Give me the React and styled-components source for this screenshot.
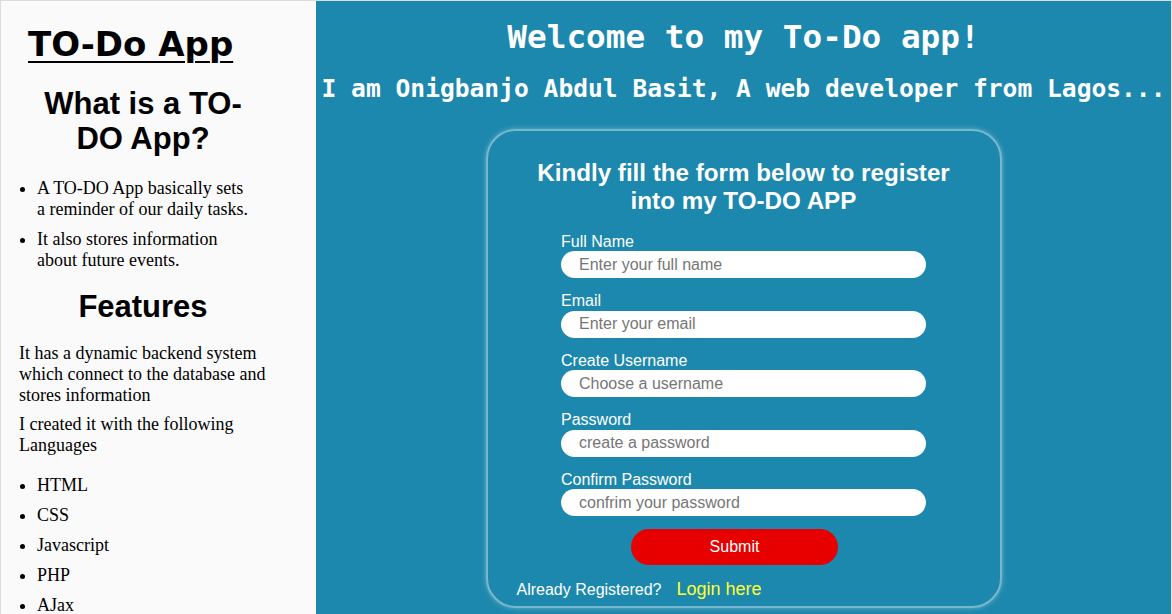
import React from 'react';
import styled, { createGlobalStyle } from 'styled-components';

const GlobalStyle = createGlobalStyle`
    html, body {
        margin: 0;
        padding: 0;
    }
    body {
        font-family: "Liberation Serif", "Times New Roman", serif;
        font-size: 18px;
        color: #000;
        background: #fff;
    }
    * {
        box-sizing: border-box;
    }
`;

const Page = styled.div`
    display: flex;
    width: 1172px;
    min-height: 614px;
    border-top: 1px solid #dcdcdc;
    border-left: 1px solid #dcdcdc;
    border-right: 1px solid #e6e6e6;
`;

const Sidebar = styled.aside`
    width: 315px;
    flex-shrink: 0;
    background-color: #fafafa;
    padding: 0 49px 0 18px;
`;

const Logo = styled.h1`
    margin: 23px 0 0 9px;
    font-family: "Comic Sans MS", "DejaVu Sans", sans-serif;
    font-size: 34px;
    line-height: 40px;
    font-weight: bold;
    text-decoration: underline;
    text-decoration-thickness: 2px;
    text-underline-offset: 5px;
`;

const SideHeading = styled.h2`
    margin: ${props => props.top}px 10px 0;
    font-family: "Liberation Sans", Arial, sans-serif;
    font-size: 31px;
    line-height: 35px;
    font-weight: bold;
    text-align: center;
`;

const List = styled.ul`
    margin: ${props => props.top}px 0 0;
    padding: 0 14px 0 18px;
    list-style: disc;
`;

const Item = styled.li`
    line-height: 21px;
    & + & {
        margin-top: 9px;
    }
`;

const Para = styled.p`
    margin: ${props => props.top}px 0 0;
    line-height: 21px;
`;

const Main = styled.main`
    flex: 1;
    background-color: #1d88ad;
    color: #fff;
    padding-bottom: 8px;
`;

const Welcome = styled.h1`
    margin: 17px 0 0;
    font-family: "DejaVu Sans Mono", "Liberation Mono", monospace;
    font-size: 32.7px;
    line-height: 38px;
    font-weight: bold;
    text-align: center;
`;

const Intro = styled.h2`
    margin: 17.5px 0 0;
    font-family: "DejaVu Sans Mono", "Liberation Mono", monospace;
    font-size: 24.6px;
    line-height: 29px;
    font-weight: bold;
    text-align: center;
    white-space: nowrap;
`;

// register card: faint light border with a soft glow
const Card = styled.section`
    width: 516px;
    margin: 26px auto 0;
    padding: 28px 29px 6px;
    border: 2px solid rgba(255, 255, 255, 0.4);
    border-radius: 30px;
    box-shadow: 0 0 5px rgba(255, 255, 255, 0.35);
    font-family: "Liberation Sans", Arial, sans-serif;
`;

const CardTitle = styled.h3`
    margin: 0;
    font-size: 24.2px;
    line-height: 28px;
    font-weight: bold;
    text-align: center;
`;

const Form = styled.form`
    width: 365px;
    margin: 18px auto 0;
    display: flex;
    flex-direction: column;
`;

const Field = styled.div`
    display: flex;
    flex-direction: column;
    margin-bottom: ${props => (props.last ? 0 : 14)}px;
`;

const Label = styled.label`
    font-size: 16px;
    line-height: 18.5px;
`;

const Input = styled.input`
    width: 100%;
    height: 27px;
    border: none;
    border-radius: 14px;
    padding: 0 18px;
    background: #fff;
    font-family: "Liberation Sans", Arial, sans-serif;
    font-size: 16px;
    color: #222;
    outline: none;
    &::placeholder {
        color: #767676;
    }
`;

const SubmitButton = styled.button`
    width: 207px;
    height: 36px;
    margin: 13px 0 0 70px;
    border: none;
    border-radius: 18px;
    background-color: #e60000;
    color: #fff;
    font-family: "Liberation Sans", Arial, sans-serif;
    font-size: 16px;
    cursor: pointer;
`;

const Footer = styled.div`
    display: flex;
    align-items: center;
    gap: 15px;
    height: 21px;
    margin-top: 14px;
    font-size: 16px;
`;

const LoginLink = styled.a`
    color: #ffff33;
    font-size: 18px;
    text-decoration: none;
`;

const fields = [
    { id: 'fullname', label: 'Full Name', type: 'text', placeholder: 'Enter your full name' },
    { id: 'email', label: 'Email', type: 'email', placeholder: 'Enter your email' },
    { id: 'username', label: 'Create Username', type: 'text', placeholder: 'Choose a username' },
    { id: 'password', label: 'Password', type: 'password', placeholder: 'create a password' },
    { id: 'confirm', label: 'Confirm Password', type: 'password', placeholder: 'confrim your password' },
];

const languages = ['HTML', 'CSS', 'Javascript', 'PHP', 'AJax'];

export default function App() {
    return (
        <>
            <GlobalStyle />
            <Page>
                <Sidebar>
                    <Logo>TO-Do App</Logo>
                    <SideHeading top={21.5}>What is a TO-DO App?</SideHeading>
                    <List top={22}>
                        <Item>A TO-DO App basically sets a reminder of our daily tasks.</Item>
                        <Item>It also stores information about future events.</Item>
                    </List>
                    <SideHeading top={18}>Features</SideHeading>
                    <Para top={19}>It has a dynamic backend system which connect to the database and stores information</Para>
                    <Para top={8}>I created it with the following Languages</Para>
                    <List top={19}>
                        {languages.map(lang => (
                            <Item key={lang}>{lang}</Item>
                        ))}
                    </List>
                </Sidebar>
                <Main>
                    <Welcome>Welcome to my To-Do app!</Welcome>
                    <Intro>I am Onigbanjo Abdul Basit, A web developer from Lagos...</Intro>
                    <Card>
                        <CardTitle>Kindly fill the form below to register into my TO-DO APP</CardTitle>
                        <Form onSubmit={e => e.preventDefault()}>
                            {fields.map((f, i) => (
                                <Field key={f.id} last={i === fields.length - 1}>
                                    <Label htmlFor={f.id}>{f.label}</Label>
                                    <Input id={f.id} type={f.type} placeholder={f.placeholder} />
                                </Field>
                            ))}
                            <SubmitButton type="submit">Submit</SubmitButton>
                        </Form>
                        <Footer>
                            <span>Already Registered?</span>
                            <LoginLink href="#login">Login here</LoginLink>
                        </Footer>
                    </Card>
                </Main>
            </Page>
        </>
    );
}
